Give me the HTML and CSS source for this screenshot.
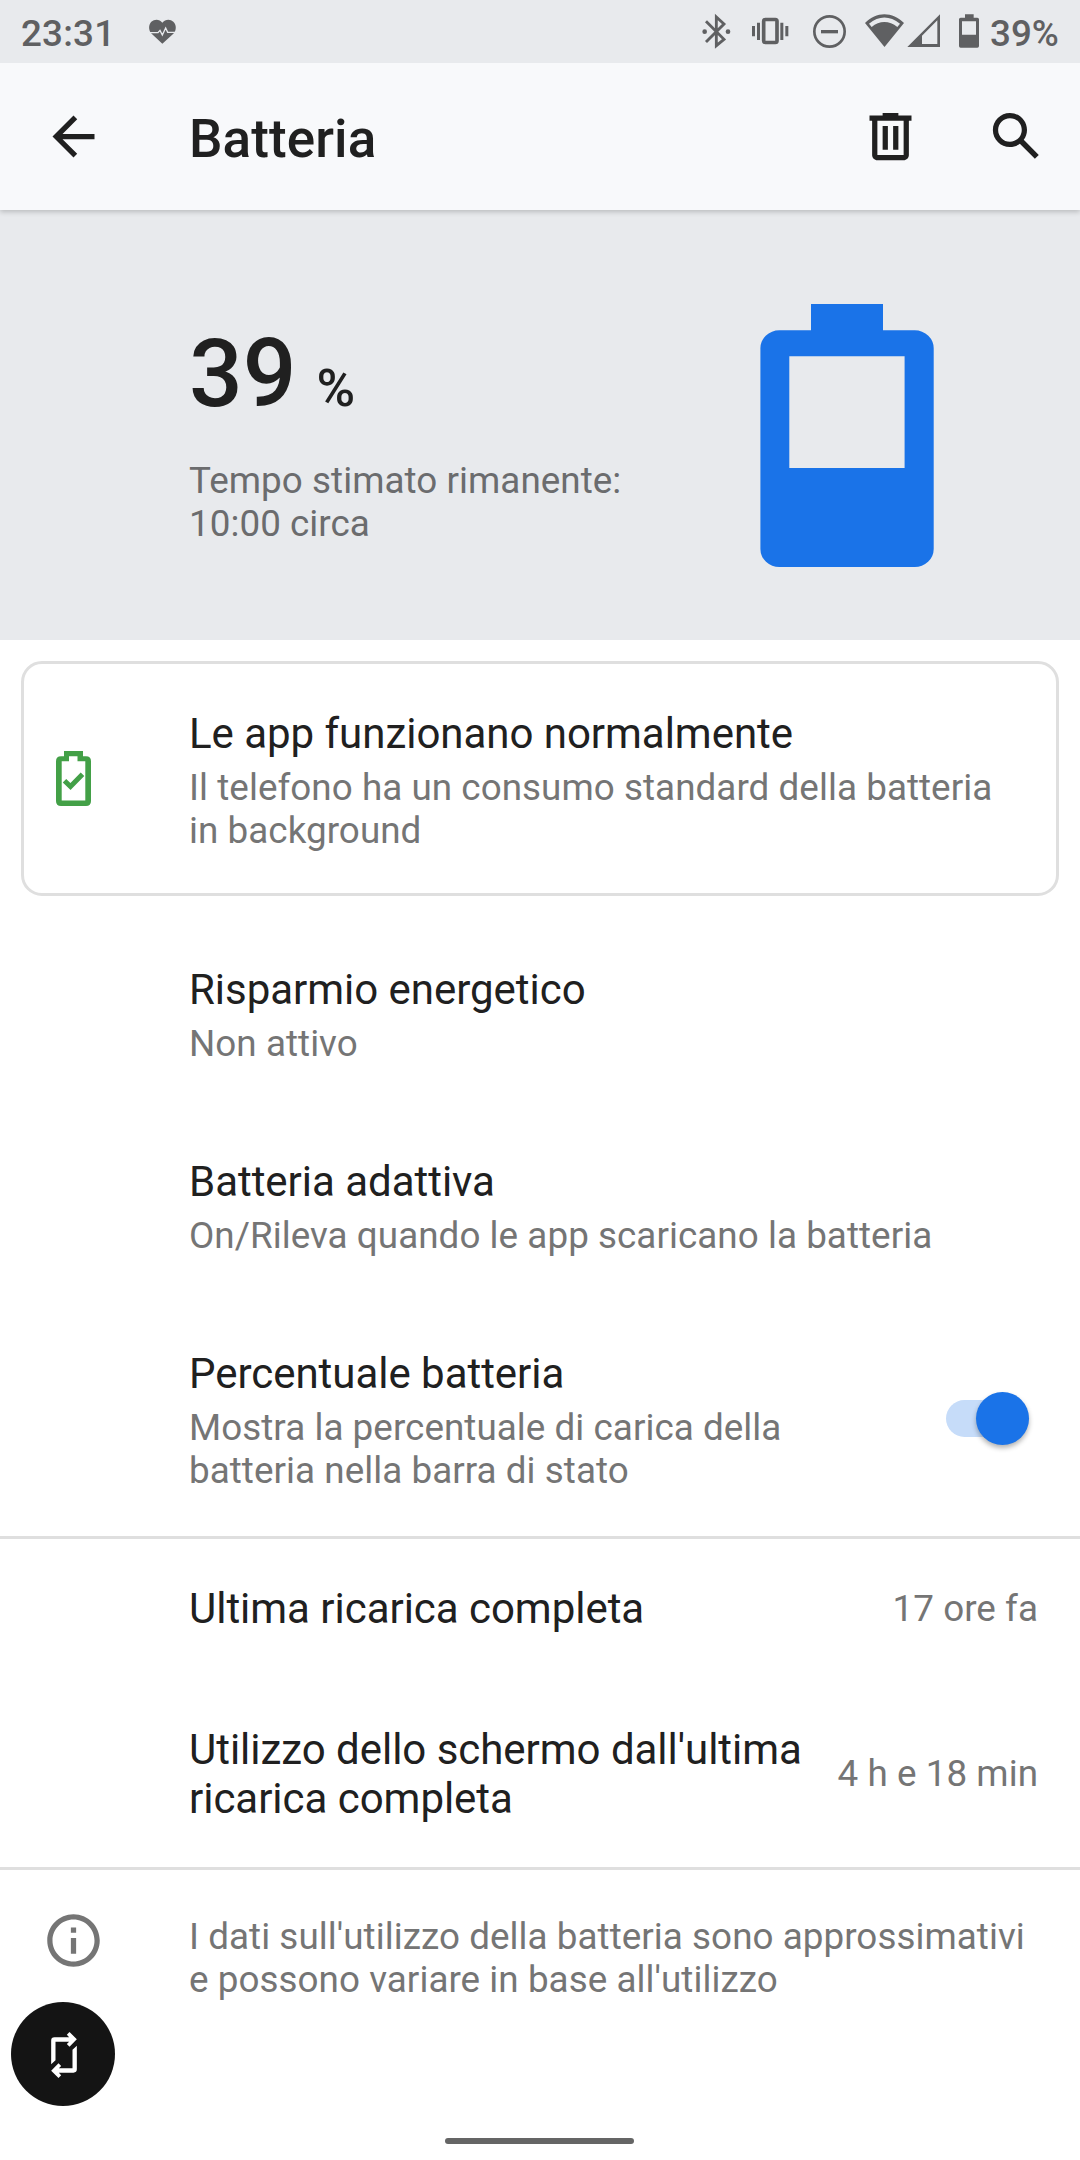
FILE: index.html
```html
<!DOCTYPE html>
<html lang="it">
<head>
<meta charset="utf-8">
<title>Batteria</title>
<link rel="stylesheet" href="styles.css">
</head>
<body>
<div class="screen">
  <div class="statusbar">
    <span class="clock">23:31</span>
    <svg class="s-heart" viewBox="440 0 90 189"><path fill="#5f6062" d="M486 131 L454 101 C444 91 444 74 453 65 C463 56 478 57 486 68 C494 57 510 56 519 65 C529 74 529 91 519 101 Z"/><path fill="none" stroke="#e8eaed" stroke-width="4" d="M444 98H473L479 91L486 105L496 84L502 97H528"/></svg>
    <div class="status-icons">
      <svg class="s-bt" viewBox="63 0 93 189"><path fill="none" stroke="#5f6062" stroke-width="8.500" d="M78 64L132 118L109 137V51L132 72L78 126"/><circle cx="74" cy="95" r="7" fill="#5f6062"/><circle cx="144" cy="95" r="7" fill="#5f6062"/></svg>
      <svg class="s-vib" viewBox="213 0 117 189"><rect x="251" y="58.500" width="40" height="69" rx="5" fill="none" stroke="#5f6062" stroke-width="11"/><path fill="#5f6062" d="M231 68h9v52h-9zM216 78h9v31h-9zM301 68h9v52h-9zM316 78h9v31h-9z"/></svg>
      <svg class="s-dnd" viewBox="396 0 105 189"><circle cx="448.500" cy="94.500" r="45.500" fill="none" stroke="#5f6062" stroke-width="8"/><rect x="423" y="90" width="51" height="10" fill="#5f6062"/></svg>
      <svg class="s-wifi" viewBox="552 0 123 189"><path fill="#5f6062" fill-rule="evenodd" d="M613.500 141L555 69C588 34 638 34 672 69ZM567 71C597 46 629 46 660 71L652 81C628 61 598 61 575 81Z"/></svg>
      <svg class="s-sig" viewBox="681 0 102 189"><path fill="#5f6062" fill-rule="evenodd" d="M682 141H780V43ZM726 132V107L772 61V132Z"/></svg>
      <svg class="s-bat" viewBox="834 0 66 189"><path fill="#5f6062" fill-rule="evenodd" d="M855 43H881V53H892Q897 53 897 58V138Q897 143 892 143H842Q837 143 837 138V58Q837 53 842 53H855ZM846 64V104H888V64Z"/></svg>
      <span class="pct">39%</span>
    </div>
  </div>

  <header class="appbar">
    <svg class="icon" viewBox="0 0 24 24"><path d="M20 11H7.830l5.590-5.590L12 4l-8 8 8 8 1.410-1.410L7.830 13H20z"/></svg>
    <h1 class="title">Batteria</h1>
    <svg class="icon trash" viewBox="0 0 24 24"><path fill-rule="evenodd" d="M15 4V3H9v1H4v2h1v13c0 1.100.9 2 2 2h10c1.100 0 2-.9 2-2V6h1V4zM17 19H7V6h10zM9 8h2v9H9zM13 8h2v9h-2z"/></svg>
    <svg class="icon" viewBox="0 0 24 24"><path d="M20.490 19l-5.730-5.730C15.530 12.200 16 10.910 16 9.500 16 5.910 13.090 3 9.500 3S3 5.910 3 9.500 5.910 16 9.500 16c1.410 0 2.700-.47 3.770-1.240L19 20.490zM5 9.500C5 7.010 7.010 5 9.500 5S14 7.010 14 9.500 11.990 14 9.500 14 5 11.990 5 9.500z"/></svg>
  </header>

  <section class="hero">
    <div class="hero-text">
      <div class="level"><span class="num">39</span><span class="unit">%</span></div>
      <p class="summary">Tempo stimato rimanente:<br>10:00 circa</p>
    </div>
    <svg class="battery" viewBox="0 0 174 264"><path fill="#1a73e8" fill-rule="evenodd" d="M51 0H123V26.300H154.500A19 18 0 0 1 173.700 45V245A19 18 0 0 1 154.500 263H19.500A19 18 0 0 1 .4 245V45A19 18 0 0 1 19.500 26.300H51ZM29.300 52.300V164H144.600V52.300Z"/></svg>
  </section>

  <section class="card">
    <svg class="card-icon" viewBox="0 0 36 55"><path fill="#43a047" fill-rule="evenodd" d="M8 0H27V5.200H30Q35 5.200 35 10.200V50Q35 55 30 55H5Q0 55 0 50V10.200Q0 5.200 5 5.200H8ZM13 5.200V10.300H5.700V49.500H29.300V10.300H21.500V5.200Z"/><path fill="none" stroke="#43a047" stroke-width="5" d="M8.500 29.700L14.500 35.500L26.500 23.300"/></svg>
    <div class="texts">
      <p class="label">Le app funzionano normalmente</p>
      <p class="summary">Il telefono ha un consumo standard della batteria in background</p>
    </div>
  </section>

  <section class="list">
    <div class="row">
      <div class="texts"><p class="label">Risparmio energetico</p><p class="summary">Non attivo</p></div>
    </div>
    <div class="row">
      <div class="texts"><p class="label">Batteria adattiva</p><p class="summary">On/Rileva quando le app scaricano la batteria</p></div>
    </div>
    <div class="row row-toggle">
      <div class="texts"><p class="label">Percentuale batteria</p><p class="summary">Mostra la percentuale di carica della batteria nella barra di stato</p></div>
      <div class="switch"><div class="thumb"></div></div>
    </div>
  </section>

  <section class="list divided">
    <div class="row row-single">
      <p class="label grow">Ultima ricarica completa</p><span class="summary value">17 ore fa</span>
    </div>
    <div class="row row-double">
      <p class="label grow">Utilizzo dello schermo dall'ultima ricarica completa</p><span class="summary value">4 h e 18 min</span>
    </div>
  </section>

  <footer class="info divided">
    <svg class="icon info-icon" viewBox="0 0 24 24"><path d="M11 7h2v2h-2zm0 4h2v6h-2zm1-9C6.480 2 2 6.480 2 12s4.480 10 10 10 10-4.480 10-10S17.520 2 12 2zm0 18c-4.410 0-8-3.590-8-8s3.590-8 8-8 8 3.590 8 8-3.590 8-8 8z"/></svg>
    <p class="summary">I dati sull'utilizzo della batteria sono approssimativi e possono variare in base all'utilizzo</p>
  </footer>

  <div class="nav-pill"></div>

  <div class="rotate-button">
    <svg class="rotate-icon" viewBox="150 453 83 144"><path id="turn" fill="#fff" d="M153 553V482Q153 472 163 472H207L200 464L208 456L230 478L208 500L200 492L207 485H166V541Z"/><use href="#turn" transform="rotate(180 191.500 525)"/></svg>
  </div>
</div>
</body>
</html>
```
FILE: styles.css
```css
* { box-sizing: border-box; margin: 0; padding: 0; }
body { background: #fff; font-family: Roboto, sans-serif; color: #202020; }
svg { display: block; flex: none; }
.screen {
  position: relative;
  display: flex;
  flex-direction: column;
  width: 1080px;
  height: 2160px;
  overflow: hidden;
}

.statusbar {
  position: relative;
  z-index: 2;
  display: flex;
  align-items: center;
  flex: none;
  height: 63px;
  padding: 0 21px;
  background: #e8eaed;
  color: #5f6062;
  font-size: 36.75px;
  font-weight: 500;
  line-height: 43px;
}
.clock { width: 126px; padding-top: 3px; letter-spacing: .2px; }
.s-heart { width: 30px; height: 63px; }
.status-icons { display: flex; align-items: center; margin-left: auto; }
.s-bt { width: 31px; height: 63px; margin-right: 19px; }
.s-vib { width: 39px; height: 63px; margin-right: 22px; }
.s-dnd { width: 35px; height: 63px; margin-right: 17px; }
.s-wifi { width: 41px; height: 63px; margin-right: 2px; }
.s-sig { width: 34px; height: 63px; margin-right: 17px; }
.s-bat { width: 22px; height: 63px; margin-right: 10px; }
.pct { width: 69px; padding-top: 3px; white-space: nowrap; }

.appbar {
  position: relative;
  z-index: 1;
  display: flex;
  align-items: center;
  flex: none;
  height: 147px;
  padding: 0 32px 0 42px;
  background: #f8f9fb;
  box-shadow: 0 2px 5px rgba(0, 0, 0, .2);
}
.icon { width: 63px; height: 63px; fill: #202020; }
.title { flex: 1; margin-left: 84px; padding-top: 5px; font-size: 53px; font-weight: 500; line-height: 62px; letter-spacing: .1px; }
.trash { margin-right: 63px; }

.hero {
  display: flex;
  flex: none;
  justify-content: space-between;
  height: 430px;
  padding: 94px 146px 0 189px;
  background: #e8eaed;
}
.hero .summary { margin-top: 16px; color: #6b6c6e; }
.level { display: flex; align-items: baseline; gap: 20px; margin-top: 15px; line-height: 110px; font-weight: 500; }
.num { font-size: 94.5px; }
.unit { font-size: 52.5px; }
.battery { width: 174px; height: 264px; }

.label { font-size: 42px; line-height: 49px; letter-spacing: -.03px; }
.summary { font-size: 36.8px; line-height: 43px; letter-spacing: .05px; color: #757575; }
.texts .label { margin-bottom: 8px; }
.texts { flex: 1; }

.card {
  display: flex;
  flex: none;
  align-items: center;
  height: 235px;
  margin: 21px 21px 23px;
  padding: 4px 42px 0 32px;
  border: 3px solid #dfdfdf;
  border-radius: 21px;
}
.card-icon { width: 36px; height: 55px; margin-right: 97px; margin-bottom: 4px; }

.row { display: flex; align-items: center; padding: 46px 42px 46px 189px; }
.row-toggle { padding-bottom: 44px; }
.row-toggle .texts { flex: none; width: 640px; }
.row-single { padding-top: 45px; padding-bottom: 47px; }
.row-double { padding-top: 45px; padding-bottom: 44px; }
.row-double .value { margin-bottom: 2px; }
.switch {
  display: flex;
  align-items: center;
  justify-content: flex-end;
  width: 83px;
  height: 37px;
  margin: 0 9px 4px auto;
  border-radius: 19px;
  background: #c6dcf9;
}
.thumb {
  flex: none;
  width: 53px;
  height: 53px;
  border-radius: 50%;
  background: #1a73e8;
  box-shadow: 0 3px 5px rgba(0, 0, 0, .3);
}

.divided { border-top: 3px solid #dfdfdf; }
.grow { flex: 1; }
.value { margin-left: 21px; white-space: nowrap; }

.info { display: flex; align-items: flex-start; padding: 39px 42px 0; }
.info-icon { margin-right: 84px; fill: #757575; }
.info .summary { padding-top: 6px; }

.nav-pill { width: 189px; height: 6px; margin: auto auto 16px 445px; border-radius: 3px; background: #656565; }

.rotate-button {
  position: absolute;
  left: 11px;
  top: 2002px;
  display: flex;
  align-items: center;
  justify-content: center;
  width: 104px;
  height: 104px;
  padding: 2px 0 0 2px;
  border-radius: 50%;
  background: #141414;
}
.rotate-icon { width: 28px; height: 48px; }
```
